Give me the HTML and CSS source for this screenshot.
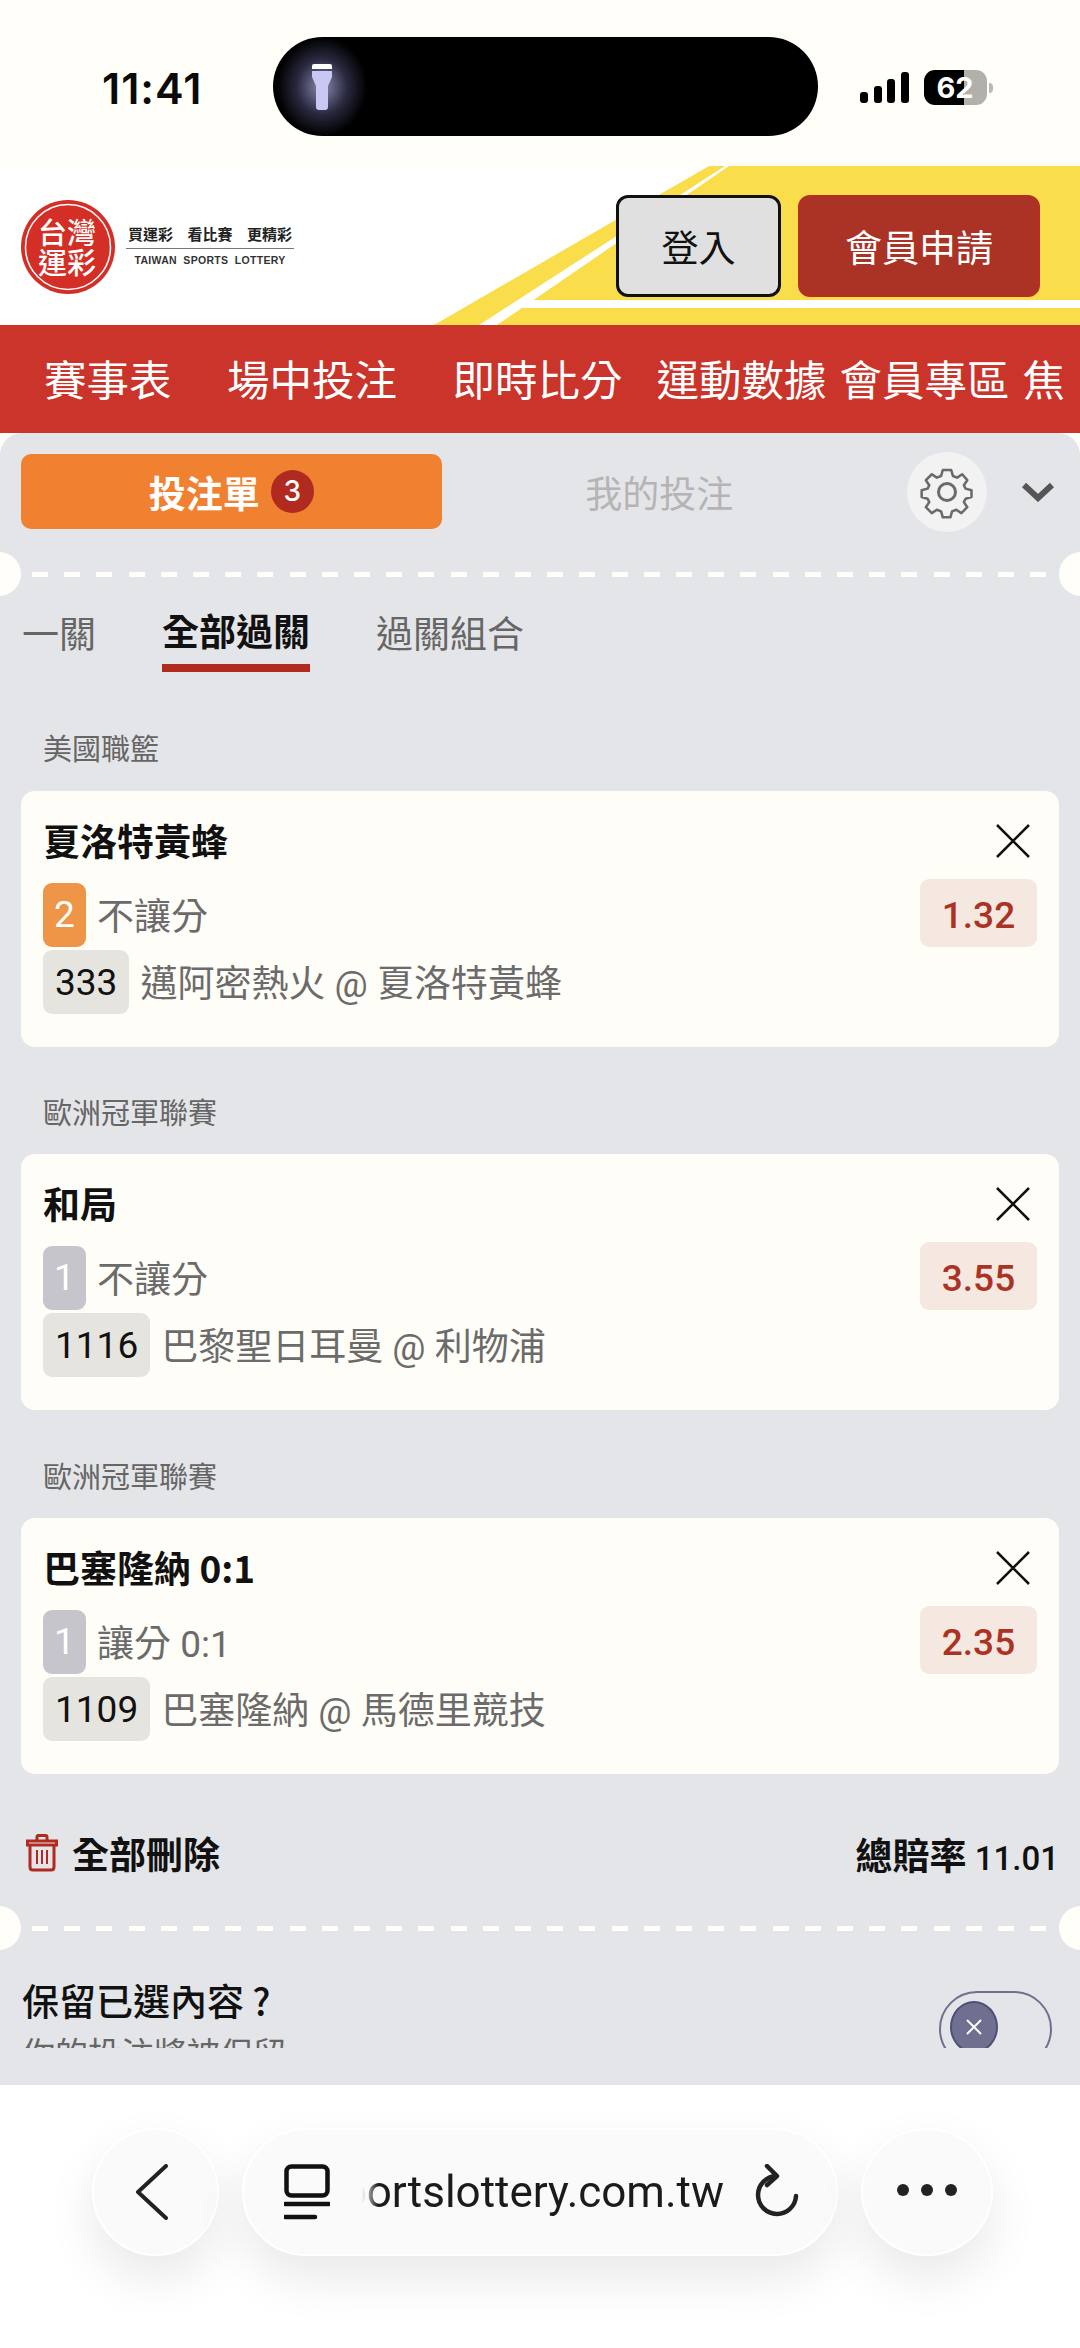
FILE: index.html
```html
<!DOCTYPE html>
<html lang="zh-Hant">
<head>
<meta charset="utf-8">
<title>台灣運彩</title>
<link rel="stylesheet" href="styles.css">
</head>
<body>
<div class="page">
  <div class="status">
    <div class="time">11:41</div>
    <div class="island">
      <div class="glow"></div>
      <svg class="torch" width="22" height="46" viewBox="0 0 22 46"><path d="M1 2q0-2 2-2h16q2 0 2 2v3H1z" fill="#fff"/><path d="M1 7h20v6l-4 9v21q0 3-3 3H8q-3 0-3-3V22l-4-9z" fill="#c9c8f4"/></svg>
    </div>
    <div class="status-right">
      <div class="signal"><i class="b1"></i><i class="b2"></i><i class="b3"></i><i class="b4"></i></div>
      <div class="battery"><span>62</span></div>
      <div class="nub"></div>
    </div>
  </div>

  <header class="header">
    <svg class="stripes" width="1080" height="159" viewBox="0 0 1080 159">
      <polygon points="709,0 1080,0 1080,159 434,159" fill="#f9dd4a"/>
      <polygon points="725,0 729,0 497,159 479,159" fill="#fff"/>
      <polygon points="527,134 1080,134 1080,142 516,142" fill="#fff"/>
    </svg>
    <div class="logo">
      <svg width="96" height="96" viewBox="0 0 96 96">
        <circle cx="48" cy="48" r="47" fill="#d32f27"/>
        <circle cx="48" cy="48" r="42.500" fill="none" stroke="#fff" stroke-width="1.500"/>
        <text class="logo-t" x="18" y="45" font-size="29">台</text>
        <text class="logo-t" x="47" y="45" font-size="29">灣</text>
        <text class="logo-t" x="18" y="75" font-size="29">運</text>
        <text class="logo-t" x="47" y="75" font-size="29">彩</text>
      </svg>
      <div class="logo-text">
        <div class="slogan"><span>買運彩</span><span>看比賽</span><span>更精彩</span></div>
        <div class="logo-en">TAIWAN&nbsp; SPORTS&nbsp; LOTTERY</div>
      </div>
    </div>
    <div class="auth">
      <button class="btn-login">登入</button>
      <button class="btn-join">會員申請</button>
    </div>
  </header>

  <nav class="nav">
    <span class="nav-item wide">賽事表</span>
    <span class="nav-item wide">場中投注</span>
    <span class="nav-item mid">即時比分</span>
    <span class="nav-item">運動數據</span>
    <span class="nav-item">會員專區</span>
    <span class="nav-item">焦</span>
  </nav>

  <main class="panel">
    <div class="top-row">
      <div class="tab-active">投注單<span class="count">3</span></div>
      <div class="tab-mine">我的投注</div>
      <div class="gear">
        <svg width="58" height="58" viewBox="0 0 58 58" fill="none" stroke="#6a6a6a" stroke-width="3" stroke-linejoin="round">
          <circle cx="29" cy="29" r="8.500"/>
          <path d="M24 3h10l2 7 5 2 6-4 6 7-4 6 2 4 7 2v8l-7 2-2 4 4 6-7 7-6-4-5 2-2 7H24l-2-7-5-2-6 4-7-7 4-6-2-4-7-2v-8l7-2 2-4-4-6 7-7 6 4 5-2z" transform="translate(4.500 4.500) scale(.845)"/>
        </svg>
      </div>
      <svg class="chev" width="32" height="20" viewBox="0 0 32 20" fill="none" stroke="#555" stroke-width="6"><path d="M2 3l14 13L30 3"/></svg>
    </div>

    <div class="divider"></div>

    <div class="tabs">
      <span class="tab">一關</span>
      <span class="tab current">全部過關</span>
      <span class="tab">過關組合</span>
    </div>

    <section class="bet first">
      <div class="league">美國職籃</div>
      <div class="card">
        <div class="card-head"><span class="pick">夏洛特黃蜂</span><svg class="close" width="34" height="34" viewBox="0 0 34 34" stroke="#111" stroke-width="2.500"><path d="M1 1l32 32M33 1L1 33"/></svg></div>
        <div class="line">
          <span class="badge orange">2</span><span class="market">不讓分</span>
          <span class="odds">1.32</span>
        </div>
        <div class="line second">
          <span class="code">333</span><span class="match">邁阿密熱火 @ 夏洛特黃蜂</span>
        </div>
      </div>
    </section>

    <section class="bet">
      <div class="league">歐洲冠軍聯賽</div>
      <div class="card">
        <div class="card-head"><span class="pick">和局</span><svg class="close" width="34" height="34" viewBox="0 0 34 34" stroke="#111" stroke-width="2.500"><path d="M1 1l32 32M33 1L1 33"/></svg></div>
        <div class="line">
          <span class="badge grey">1</span><span class="market">不讓分</span>
          <span class="odds">3.55</span>
        </div>
        <div class="line second">
          <span class="code">1116</span><span class="match">巴黎聖日耳曼 @ 利物浦</span>
        </div>
      </div>
    </section>

    <section class="bet">
      <div class="league">歐洲冠軍聯賽</div>
      <div class="card">
        <div class="card-head"><span class="pick">巴塞隆納 0:1</span><svg class="close" width="34" height="34" viewBox="0 0 34 34" stroke="#111" stroke-width="2.500"><path d="M1 1l32 32M33 1L1 33"/></svg></div>
        <div class="line">
          <span class="badge grey">1</span><span class="market">讓分 0:1</span>
          <span class="odds">2.35</span>
        </div>
        <div class="line second">
          <span class="code">1109</span><span class="match">巴塞隆納 @ 馬德里競技</span>
        </div>
      </div>
    </section>

    <div class="summary">
      <div class="del">
        <svg width="32" height="38" viewBox="0 0 32 38" fill="none" stroke="#b02a20" stroke-width="3"><path d="M11 6V3q0-1.500 1.500-1.500h7Q21 1.500 21 3v3M1.500 7h29v4h-29zM4 11v22q0 3 3 3h18q3 0 3-3V11"/><path d="M11 16v14M16 16v14M21 16v14" stroke-width="2"/></svg>
        全部刪除
      </div>
      <div class="total">總賠率 <span class="total-num">11.01</span></div>
    </div>

    <div class="divider low"></div>

    <div class="keep">
      <div class="keep-text">
        <div class="keep-title">保留已選內容 ?</div>
        <div class="keep-sub">你的投注將被保留</div>
      </div>
      <div class="toggle">
        <div class="knob"><svg width="20" height="20" viewBox="0 0 20 20" stroke="#fff" stroke-width="2"><path d="M3 3l14 14M17 3L3 17"/></svg></div>
      </div>
    </div>
  </main>

  <footer class="browser">
    <div class="round back"><svg width="34" height="56" viewBox="0 0 34 56" fill="none" stroke="#222" stroke-width="4" stroke-linecap="round" stroke-linejoin="round"><path d="M31 2L3 28l28 26"/></svg></div>
    <div class="url">
      <svg class="tabs-icon" width="46" height="56" viewBox="0 0 46 56" fill="none" stroke="#111" stroke-width="4.500"><rect x="2.500" y="2.500" width="41" height="29" rx="5"/><path d="M1 40h44M1 53h30" stroke-linecap="round"/></svg>
      <div class="url-clip"><span>sportslottery.com.tw</span></div>
      <svg class="reload" width="46" height="56" viewBox="0 0 46 56" fill="none" stroke="#222" stroke-width="4.500" stroke-linecap="round" stroke-linejoin="round"><path d="M23 12a19 19 0 1 0 20 20"/><path d="M14 2l10 10-10 9"/></svg>
    </div>
    <div class="round more"><i></i><i></i><i></i></div>
  </footer>
</div>
</body>
</html>
```
FILE: styles.css
```css
* { box-sizing: border-box; }
html, body { margin: 0; padding: 0; }
body { font-family: "Noto Sans CJK TC", "Noto Sans", sans-serif; background: #fffef8; color: #111; }
button { font: inherit; }
.page { width: 1080px; height: 2348px; overflow: hidden; display: flex; flex-direction: column; background: #fffef8; }

/* status bar */
.status { height: 166px; flex: none; display: flex; align-items: flex-start; position: relative; }
.time { margin: 65px 0 0 102px; width: 171px; font: 600 43px/46px Inter, sans-serif; color: #0a0a0a; letter-spacing: 1px; }
.island { margin-top: 37px; width: 545px; height: 99px; border-radius: 50px; background: #000; position: relative; overflow: hidden; }
.glow { position: absolute; left: 4px; top: 0; width: 90px; height: 99px; background: radial-gradient(ellipse closest-side, rgba(200,200,255,.7), rgba(130,130,200,.32) 55%, rgba(0,0,0,0)); }
.torch { position: absolute; left: 38px; top: 27px; }
.status-right { margin: 70px 0 0 42px; display: flex; align-items: center; height: 35px; }
.signal { display: flex; align-items: flex-end; gap: 5.500px; height: 31px; margin-right: 15px; }
.signal i { width: 8px; background: #000; border-radius: 3px; display: block; }
.b1 { height: 11px; } .b2 { height: 17px; } .b3 { height: 24px; } .b4 { height: 31px; }
.battery { width: 63px; height: 35px; border-radius: 11px; background: linear-gradient(90deg, #000 0 63%, #b1b0aa 63%); display: flex; align-items: center; justify-content: center; color: #fff; font: 700 29px/35px Inter, sans-serif; }
.nub { width: 4px; height: 10px; margin-left: 2px; background: #b9b8b2; border-radius: 0 5px 5px 0; }

/* header */
.header { height: 159px; flex: none; background: #fff; position: relative; display: flex; align-items: flex-start; justify-content: space-between; overflow: hidden; }
.stripes { position: absolute; left: 0; top: 0; }
.logo { position: relative; display: flex; align-items: center; margin: 33px 0 0 20px; }
.logo-t { font-family: "Noto Sans CJK TC", sans-serif; font-weight: 500; fill: #fff; }
.logo-text { margin-left: 10px; margin-top: -3px; width: 168px; }
.slogan { display: flex; justify-content: space-between; font-size: 15px; line-height: 20px; font-weight: 700; color: #222; padding: 0 2px 4px; border-bottom: 1.500px solid #777; }
.logo-en { font: 700 10.500px/16px "Liberation Sans", sans-serif; letter-spacing: .3px; color: #333; text-align: center; margin-top: 3px; white-space: nowrap; }
.auth { position: relative; display: flex; gap: 17px; margin: 29px 40px 0 0; }
.btn-login { width: 165px; height: 102px; padding: 0; background: #e0e0e0; color: #111; border: 3px solid #111; border-radius: 12px; font-size: 37px; }
.btn-join { width: 242px; height: 102px; padding: 0; background: #ab3325; color: #fff; border: 2px solid #b72e25; border-radius: 12px; font-size: 37px; }

/* nav */
.nav { height: 108px; flex: none; background: #ca342a; color: #fff; display: flex; align-items: center; gap: 13px; padding: 0 0 3px 44px; overflow: hidden; font-size: 42.500px; line-height: 60px; white-space: nowrap; }
.nav-item { flex: none; }
.wide { margin-right: 42.500px; }
.mid { margin-right: 21px; }

/* panel */
.panel { flex: 1; background: #e4e5e8; border-radius: 22px 22px 0 0; }
.top-row { display: flex; align-items: center; padding: 19px 26px 0 21px; height: 99px; }
.tab-active { width: 421px; height: 75px; border-radius: 10px; background: #ef8130; color: #fff; font-size: 37px; font-weight: 700; display: flex; align-items: center; justify-content: center; margin-top: -1px; }
.count { width: 43px; height: 43px; border-radius: 50%; background: #b02a20; margin-left: 11px; font: 500 28px/43px Inter, sans-serif; text-align: center; }
.tab-mine { width: 436px; margin-right: 30px; text-align: center; font-size: 37px; color: #b4b4b4; }
.gear { width: 80px; height: 80px; border-radius: 50%; background: #f2f2f3; display: flex; align-items: center; justify-content: center; flex: none; }
.chev { margin-left: 35px; flex: none; }

.divider { margin-top: 40px; height: 5px; position: relative; background: repeating-linear-gradient(90deg, #fffef8 0 16px, transparent 16px 32.200px); background-position: 32px 0; background-size: 1016px 5px; background-repeat: no-repeat; }
.divider::before, .divider::after { content: ""; position: absolute; top: -20px; width: 44px; height: 44px; border-radius: 50%; background: #fffef8; }
.divider::before { left: -23px; }
.divider::after { right: -23px; }
.divider.low { margin-top: 47px; }

.tabs { display: flex; gap: 66px; padding-left: 22px; margin-top: 28px; white-space: nowrap; }
.tab { font-size: 37px; line-height: 54px; height: 67px; color: #666; }
.tab.current { color: #111; font-weight: 700; margin-top: -2px; height: 69px; border-bottom: 8px solid #b02a20; }

.bet { margin-top: 43px; }
.bet.first { margin-top: 54px; }
.bet.first + .bet { margin-top: 42px; }
.league { font-size: 29px; line-height: 44px; color: #666; padding: 0 0 2px 43px; height: 44px; margin-bottom: 21px; }
.bet.first .league { margin-top: -1px; margin-bottom: 22px; }
.card { margin: 0 21px; height: 256px; background: #fffdf7; border-radius: 14px; padding: 24px 22px 0 22px; }
.card-head { display: flex; align-items: center; justify-content: space-between; height: 50px; padding: 2px 7px 0 0; }
.pick { font-size: 37px; font-weight: 700; line-height: 50px; color: #111; margin-top: -2px; }
.line { display: flex; align-items: center; margin-top: 18px; height: 64px; position: relative; }
.line.second { margin-top: 3px; }
.badge { width: 43px; height: 64px; border-radius: 9px; color: #fff; font: 400 37px/64px Roboto, sans-serif; text-align: center; flex: none; }
.orange { background: #ef9547; }
.grey { background: #c5c5cb; }
.market { margin: -2px 0 0 11px; font-size: 37px; color: #6b6b6b; font-family: Roboto, "Noto Sans CJK TC", sans-serif; }
.odds { margin-left: auto; margin-top: -4px; width: 117px; height: 68px; border-radius: 9px; background: #f5e8e1; color: #ab3325; font: 500 37px/73px Roboto, sans-serif; text-align: center; }
.code { padding: 0 12px; height: 64px; border-radius: 9px; background: #e6e4de; color: #111; font: 400 37px/66px Roboto, sans-serif; flex: none; }
.match { margin: -2px 0 0 11px; font-size: 37px; color: #6b6b6b; font-family: Roboto, "Noto Sans CJK TC", sans-serif; white-space: nowrap; }

.summary { display: flex; align-items: center; justify-content: space-between; height: 50px; margin-top: 55px; padding: 0 21px 0 26px; }
.del { display: flex; align-items: center; gap: 14px; font-size: 37px; font-weight: 700; margin-top: -2px; }
.total { font-size: 37px; font-weight: 700; }
.total-num { font: 500 33px Roboto, sans-serif; }

.keep { margin-top: 44px; height: 73px; overflow: hidden; display: flex; justify-content: space-between; padding: 0 28px 0 22px; }
.keep-title { font-size: 37px; line-height: 50px; font-weight: 500; color: #111; }
.keep-sub { font-size: 33px; line-height: 46px; color: #666; margin-top: 4px; }
.toggle { width: 113px; height: 76px; margin-top: 16px; border: 2.500px solid #6f7090; border-radius: 38px; padding: 8px 0 0 9px; }
.knob { width: 48px; height: 52px; border-radius: 50%; background: #6f7090; border: 2px solid #4d4f78; display: flex; align-items: center; justify-content: center; }

/* browser bar */
.browser { height: 263px; flex: none; background: #fff; display: flex; gap: 23px; padding: 43px 0 0 92px; align-items: flex-start; }
.round, .url { height: 128px; background: #fafafa; border: 2px solid #fff; box-shadow: 0 22px 50px rgba(0,0,0,.09); display: flex; align-items: center; flex: none; }
.round { width: 127px; border-radius: 50%; justify-content: center; }
.back svg { margin-left: -7px; }
.round.more { width: 132px; gap: 12px; }
.more i { width: 12px; height: 12px; border-radius: 50%; background: #222; display: block; margin-top: -4px; }
.url { width: 596px; border-radius: 64px; padding-left: 40px; }
.tabs-icon { flex: none; }
.url-clip { width: 362px; margin-left: 32px; display: flex; justify-content: flex-end; overflow: hidden; white-space: nowrap; font: 400 44px/56px Roboto, sans-serif; color: #1b1b1b; flex: none; -webkit-mask-image: linear-gradient(90deg, transparent 0, #000 16px); mask-image: linear-gradient(90deg, transparent 0, #000 16px); }
.reload { margin-left: 29px; flex: none; }
```
